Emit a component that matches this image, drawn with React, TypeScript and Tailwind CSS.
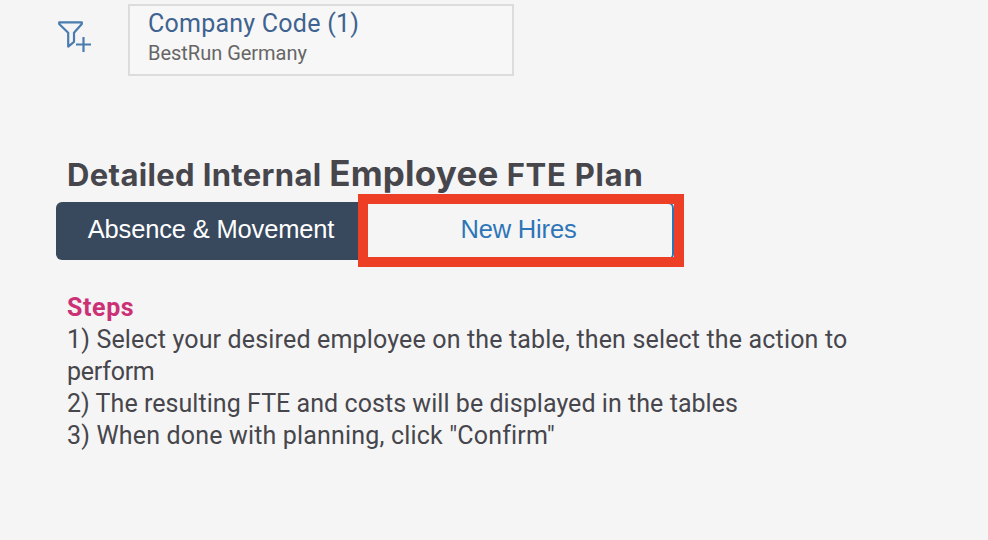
const STEPS = [
  { text: '1) Select your desired employee on the table, then select the action to', spacing: 'tracking-[0.16px]' },
  { text: 'perform', spacing: 'tracking-[-0.25px]' },
  { text: '2) The resulting FTE and costs will be displayed in the tables', spacing: 'tracking-[0.05px]' },
  { text: '3) When done with planning, click "Confirm"', spacing: 'tracking-[0.17px]' },
];

function FilterAddIcon() {
  return (
    <svg
      className="mt-5 ml-[57px] h-8 w-9 shrink-0"
      viewBox="0 0 36 32"
      fill="none"
      stroke="#4a7cae"
      strokeWidth="2.2"
      strokeLinejoin="round"
      aria-hidden="true"
    >
      <path d="M2.2 2.3H24.8V4L17 12.8V21.8L11.2 26.6V12.8L2.2 4Z" />
      <path d="M19 24.5H34M26.5 17V32" />
    </svg>
  );
}

function FilterBar() {
  return (
    <header className="flex h-[76px] items-start">
      <FilterAddIcon />
      <div className="mt-1 ml-[35px] h-[72px] w-[386px] border-2 border-[#dcdcdc] bg-[#f7f7f7] pl-[18px]">
        <div className="mt-[2px] h-[31px] text-[25px] leading-[31px] tracking-[0.24px] whitespace-nowrap text-[#3f6390]">
          Company Code (1)
        </div>
        <div className="h-[28px] text-[20px] leading-[28px] tracking-[-0.02px] whitespace-nowrap text-[#666666]">
          BestRun Germany
        </div>
      </div>
    </header>
  );
}

function PlanTabs() {
  return (
    <div className="ml-14 flex h-[58px] w-[618px] font-['Liberation_Sans',Arial,sans-serif] text-[25.5px] leading-[54px] tracking-[-0.16px]">
      <button className="h-full w-[309px] rounded-l-md bg-[#38495e] pb-[4px] pl-px text-center whitespace-nowrap text-white">
        Absence &amp; Movement
      </button>
      <div className="relative h-full w-[309px]">
        <button className="h-full w-full rounded-r-md border-2 border-[#2e75b8] pr-[2px] pb-[4px] text-center leading-[50px] whitespace-nowrap text-[#2e75b8]">
          New Hires
        </button>
        <div className="absolute -top-2 -left-[7px] h-[73px] w-[326px] border-[10px] border-[#ec3f26]" />
      </div>
    </div>
  );
}

export default function App() {
  return (
    <main className="h-[540px] w-[988px] overflow-hidden bg-[#f5f5f5] font-[Roboto,'Open_Sans',sans-serif] text-[#46464c]">
      <FilterBar />
      <h1 className="mt-[74px] ml-[67px] h-[52px] font-[Inter,Roboto,sans-serif] text-[31px] leading-[46px] font-bold tracking-[0.35px] whitespace-nowrap">
        <span>Detailed Internal </span>
        <span className="text-[35px] tracking-[0.2px]">Employee</span>
        <span className="tracking-[0.75px]"> FTE Plan</span>
      </h1>
      <PlanTabs />
      <section className="mt-8 ml-[67px] text-[25px] leading-8">
        <h2 className="font-bold tracking-[0.6px] text-[#cb3175]">Steps</h2>
        {STEPS.map((step) => (
          <p key={step.text} className={`whitespace-nowrap ${step.spacing}`}>
            {step.text}
          </p>
        ))}
      </section>
    </main>
  );
}
